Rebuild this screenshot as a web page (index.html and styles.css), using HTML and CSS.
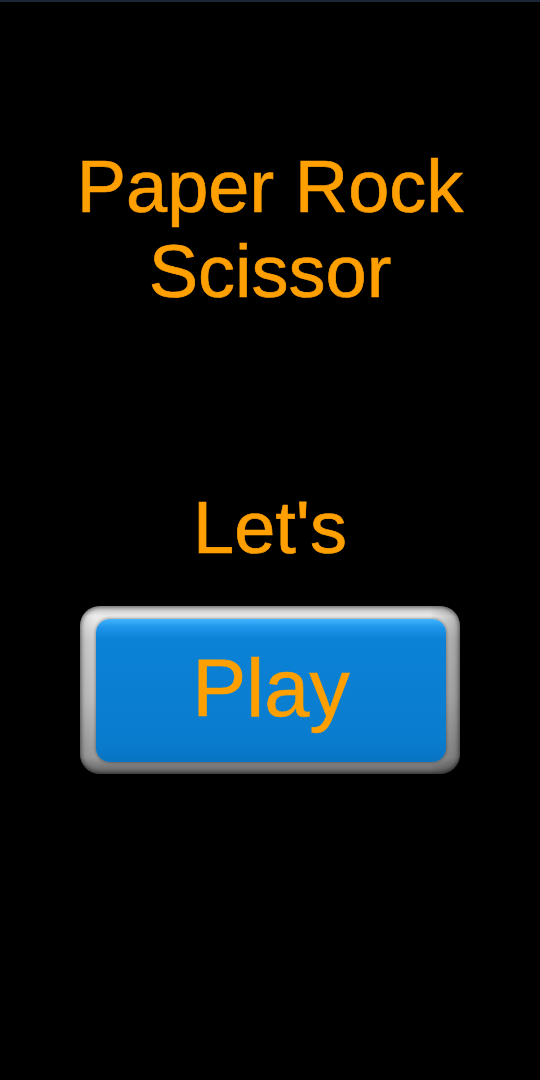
FILE: index.html
```html
<!DOCTYPE html>
<html>
<head>
<meta charset="utf-8">
<link rel="stylesheet" href="styles.css">
</head>
<body>
<div class="screen">
  <h1 class="title">Paper Rock<br>Scissor</h1>
  <p class="lets">Let's</p>
  <div class="btn-frame">
    <div class="btn-face"><span class="btn-label">Play</span></div>
  </div>
</div>
</body>
</html>
```
FILE: styles.css
```css
html, body {
  margin: 0;
  padding: 0;
  background: #000;
}
body {
  width: 540px;
  height: 1080px;
  overflow: hidden;
  font-family: "Liberation Sans", Arial, sans-serif;
}
.screen {
  box-sizing: border-box;
  height: 1080px;
  border-top: 2px solid #1b2739;
  display: flex;
  flex-direction: column;
  align-items: center;
  padding-top: 142px;
}
.title {
  margin: 0;
  font-weight: normal;
  font-size: 74px;
  line-height: 85px;
  color: #ffa000;
  text-align: center;
  -webkit-text-stroke: 0.7px #ffa000;
}
.lets {
  margin: 171px 0 0;
  font-size: 74px;
  line-height: 85px;
  color: #ffa000;
  text-align: center;
  -webkit-text-stroke: 0.7px #ffa000;
}
.btn-frame {
  box-sizing: border-box;
  margin-top: 36px;
  width: 380px;
  height: 168px;
  border-radius: 20px;
  padding: 13px 14px 12px 16px;
  background:
    linear-gradient(90deg, rgba(0,0,0,0.1) 0%, rgba(0,0,0,0) 4%, rgba(0,0,0,0) 92%, rgba(0,0,0,0.25) 100%),
    linear-gradient(180deg, #bdbdbd 0%, #ececec 6%, #d2d2d2 20%, #c2c2c2 55%, #9c9c9c 90%, #5c5c5c 100%);
  box-shadow: inset 0 0 4px 1px rgba(0,0,0,0.55);
}
.btn-face {
  height: 100%;
  border-radius: 14px;
  background: linear-gradient(180deg, #42b4ff 0%, #1e95ea 6%, #0b82d6 14%, #0a7cce 85%, #0874c2 100%);
  box-shadow: 0 0 3px 1px rgba(0,0,0,0.3);
  display: flex;
  align-items: center;
  justify-content: center;
  box-sizing: border-box;
  padding-bottom: 5px;
}
.btn-label {
  font-size: 81px;
  line-height: 81px;
  color: #ffa000;
  -webkit-text-stroke: 0.6px #ffa000;
}
```
